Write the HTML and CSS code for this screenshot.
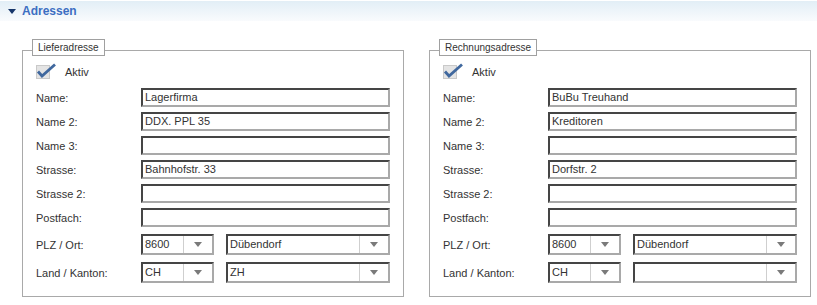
FILE: index.html
```html
<!DOCTYPE html>
<html lang="de">
<head>
  <meta charset="UTF-8" />
  <title>Adressen</title>
  <link rel="stylesheet" href="styles.css">
</head>
<body>
  <div class="panel-header">
    <span class="caret"></span>
    <span class="panel-title">Adressen</span>
  </div>

  <div class="address-grid">
    <div class="address-box">
      <div class="legend">Lieferadresse</div>
      <div class="check-row">
        <svg class="check" width="22" height="16" viewBox="0 0 22 16">
          <rect x="0.5" y="1.5" width="13" height="13" fill="#e4e4e4" stroke="#c9c9c9"/>
          <path d="M2 7.5 L6 12 L19 0.5" fill="none" stroke="#40689e" stroke-width="2.8"/>
        </svg>
        <span>Aktiv</span>
      </div>
      <div class="form-grid">
        <label>Name:</label><div class="field">Lagerfirma</div>
        <label>Name 2:</label><div class="field">DDX. PPL 35</div>
        <label>Name 3:</label><div class="field"></div>
        <label>Strasse:</label><div class="field">Bahnhofstr. 33</div>
        <label>Strasse 2:</label><div class="field"></div>
        <label>Postfach:</label><div class="field"></div>
        <label class="tall">PLZ / Ort:</label>
        <div class="combo-pair">
          <div class="combo small"><span class="value">8600</span><span class="arrow"></span></div>
          <div class="combo"><span class="value">Dübendorf</span><span class="arrow"></span></div>
        </div>
        <label class="tall">Land / Kanton:</label>
        <div class="combo-pair">
          <div class="combo small"><span class="value">CH</span><span class="arrow"></span></div>
          <div class="combo"><span class="value">ZH</span><span class="arrow"></span></div>
        </div>
      </div>
    </div>

    <div class="address-box">
      <div class="legend">Rechnungsadresse</div>
      <div class="check-row">
        <svg class="check" width="22" height="16" viewBox="0 0 22 16">
          <rect x="0.5" y="1.5" width="13" height="13" fill="#e4e4e4" stroke="#c9c9c9"/>
          <path d="M2 7.5 L6 12 L19 0.5" fill="none" stroke="#40689e" stroke-width="2.8"/>
        </svg>
        <span>Aktiv</span>
      </div>
      <div class="form-grid">
        <label>Name:</label><div class="field">BuBu Treuhand</div>
        <label>Name 2:</label><div class="field">Kreditoren</div>
        <label>Name 3:</label><div class="field"></div>
        <label>Strasse:</label><div class="field">Dorfstr. 2</div>
        <label>Strasse 2:</label><div class="field"></div>
        <label>Postfach:</label><div class="field"></div>
        <label class="tall">PLZ / Ort:</label>
        <div class="combo-pair">
          <div class="combo small"><span class="value">8600</span><span class="arrow"></span></div>
          <div class="combo"><span class="value">Dübendorf</span><span class="arrow"></span></div>
        </div>
        <label class="tall">Land / Kanton:</label>
        <div class="combo-pair">
          <div class="combo small"><span class="value">CH</span><span class="arrow"></span></div>
          <div class="combo"><span class="value"></span><span class="arrow"></span></div>
        </div>
      </div>
    </div>
  </div>
</body>
</html>
```

FILE: styles.css
```css
* {
  margin: 0;
  padding: 0;
  box-sizing: border-box;
}
body {
  font-family: "Liberation Sans", Arial, sans-serif;
  font-size: 11px;
  color: #333;
  background: #ffffff;
}

/* Kopfzeile */
.panel-header {
  margin-top: 1px;
  height: 20px;
  display: flex;
  align-items: center;
  padding-left: 8px;
  background: linear-gradient(#e2eef6, #f9fbfd);
}
.caret {
  width: 0;
  height: 0;
  border-left: 4px solid transparent;
  border-right: 4px solid transparent;
  border-top: 5px solid #17366a;
  margin-right: 6px;
  margin-top: 1px;
}
.panel-title {
  font-size: 12px;
  font-weight: bold;
  color: #3c6ec2;
}

/* Adressboxen */
.address-grid {
  display: flex;
  gap: 25px;
  margin-top: 29px;
  padding-left: 22px;
}
.address-box {
  position: relative;
  width: 382px;
  height: 247px;
  border: 1px solid #a9a9a9;
  padding: 14px 13px 0 13px;
}
.legend {
  position: absolute;
  top: -12px;
  left: 9px;
  height: 17px;
  line-height: 15px;
  padding: 0 5px;
  font-size: 10px;
  border: 1px solid #a0a0a0;
  background: #ffffff;
}

.check-row {
  display: flex;
  align-items: center;
  height: 14px;
  margin-bottom: 9px;
}
.check {
  margin-right: 7px;
  overflow: visible;
}
.check-row span {
  font-size: 11px;
}

.form-grid {
  display: grid;
  grid-template-columns: 105px 249px;
  row-gap: 5px;
  align-items: center;
}
.form-grid label {
  font-size: 11px;
}
.form-grid label.tall {
  margin-top: 2px;
}

.field {
  height: 19px;
  line-height: 15px;
  padding-left: 2px;
  border-top: 2px solid #454545;
  border-left: 2px solid #454545;
  border-right: 2px solid #a9a9a9;
  border-bottom: 2px solid #a9a9a9;
  font-size: 11px;
  color: #333;
}

.combo-pair {
  display: flex;
  gap: 12px;
  margin-top: 2px;
}
.combo {
  flex: 1;
  display: flex;
  height: 21px;
  border-top: 2px solid #454545;
  border-left: 2px solid #454545;
  border-right: 2px solid #a9a9a9;
  border-bottom: 2px solid #a9a9a9;
}
.combo.small {
  flex: 0 0 73px;
}
.combo .value {
  flex: 1;
  padding-left: 2px;
  line-height: 17px;
  font-size: 11px;
}
.combo .arrow {
  width: 29px;
  border-left: 1px solid #cfcfcf;
  display: flex;
  align-items: center;
  justify-content: center;
}
.combo .arrow::after {
  content: "";
  width: 0;
  height: 0;
  border-left: 4px solid transparent;
  border-right: 4px solid transparent;
  border-top: 5px solid #7a7a7a;
}
```
